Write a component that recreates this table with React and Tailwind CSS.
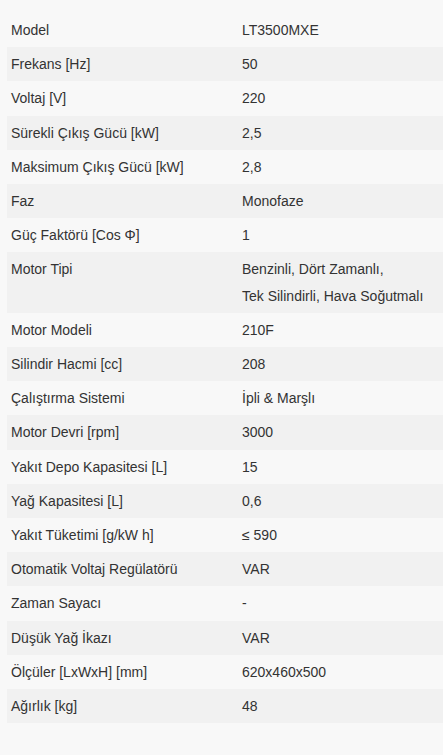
import React from 'react';

const specs = [
  ['Model', 'LT3500MXE'],
  ['Frekans [Hz]', '50'],
  ['Voltaj [V]', '220'],
  ['Sürekli Çıkış Gücü [kW]', '2,5'],
  ['Maksimum Çıkış Gücü [kW]', '2,8'],
  ['Faz', 'Monofaze'],
  ['Güç Faktörü [Cos Φ]', '1'],
  ['Motor Tipi', ['Benzinli, Dört Zamanlı,', 'Tek Silindirli, Hava Soğutmalı']],
  ['Motor Modeli', '210F'],
  ['Silindir Hacmi [cc]', '208'],
  ['Çalıştırma Sistemi', 'İpli & Marşlı'],
  ['Motor Devri [rpm]', '3000'],
  ['Yakıt Depo Kapasitesi [L]', '15'],
  ['Yağ Kapasitesi [L]', '0,6'],
  ['Yakıt Tüketimi [g/kW h]', '≤ 590'],
  ['Otomatik Voltaj Regülatörü', 'VAR'],
  ['Zaman Sayacı', '-'],
  ['Düşük Yağ İkazı', 'VAR'],
  ['Ölçüler [LxWxH] [mm]', '620x460x500'],
  ['Ağırlık [kg]', '48'],
];

const App = () => {
  return (
    <div className="min-h-[755px] bg-[#f8f8f8] pl-[7px] pt-[13px] text-[14px] leading-[26.2px] text-[#333333] font-['Liberation_Sans',Arial,sans-serif]">
      <div className="flex flex-col">
        {specs.map(([label, value], i) => (
          <div
            key={label}
            className={`grid grid-cols-[231px_1fr] ${i % 2 === 1 ? 'bg-[#f1f1f1]' : ''}`}
          >
            <div className="px-1 py-1">{label}</div>
            <div className="px-1 py-1">
              {Array.isArray(value) ? value.map(line => <div key={line}>{line}</div>) : value}
            </div>
          </div>
        ))}
      </div>
    </div>
  );
};

export default App;
